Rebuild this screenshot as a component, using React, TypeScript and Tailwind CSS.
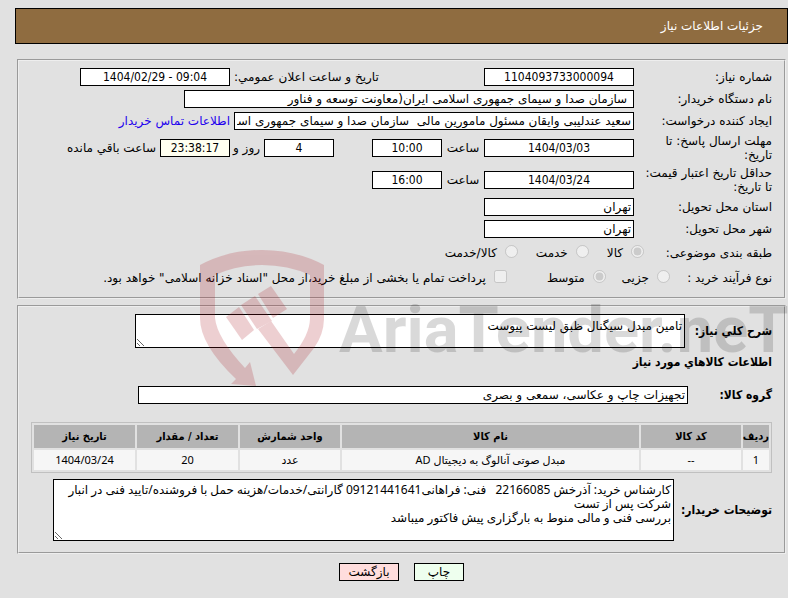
const numeric = "bg-white text-center font-['DejaVu_Sans_Condensed','DejaVu_Sans',sans-serif] [direction:ltr]"
const heading = "font-bold font-['DejaVu_Sans_Condensed','DejaVu_Sans',sans-serif]"

const Field = ({ id, label, value, className }: { id: string; label: string; value: string; className: string }) => (
  <input
    id={id}
    aria-label={label}
    readOnly
    defaultValue={value}
    className={`h-[18px] shrink-0 border border-black px-0.5 ${className}`}
  />
)

const Choice = ({ type, name, label, checked }: { type: "radio" | "checkbox"; name: string; label: string; checked?: boolean }) => (
  <label className="flex items-center gap-2">
    <input
      type={type}
      name={name}
      disabled
      defaultChecked={checked}
      className="mb-1 size-[13px]"
    />
    {label}
  </label>
)

const columns = [
  { title: "ردیف", value: "1", width: "w-[26px]" },
  { title: "کد کالا", value: "--", width: "w-[100px]" },
  { title: "نام کالا", value: "مبدل صوتی آنالوگ به دیجیتال AD", width: "" },
  { title: "واحد شمارش", value: "عدد", width: "w-[100px]" },
  { title: "تعداد / مقدار", value: "20", width: "w-[101px]" },
  { title: "تاریخ نیاز", value: "1404/03/24", width: "w-[101px]" },
]

const Watermark = () => (
  <div aria-hidden="true" dir="ltr" className="pointer-events-none absolute top-[250px] right-0">
    <svg viewBox="200 0 588 140" className="h-[140px] w-[588px]">
      <g fill="#aa141e" opacity="0.2">
        <path d="M200 15Q228 0 262 0Q296 0 324 15V68Q324 84 314 98L293 125L258 79L271 71L294 104Q310 84 310 68V25Q288 15 262 15Q236 15 215 25V68Q217 88 245 118L250 112L256 136L231 134L236 129Q200 95 200 68Z" />
        <path d="M226 67L239 57L254 80L242 90Z" />
        <path d="M241 55L255 46L272 71L257 79Z" />
        <path d="M258 44L271 36L287 59L273 68Z" />
      </g>
      <text x="339" y="102" fill="#000" fillOpacity="0.15" fontSize="65" fontWeight="700" fontFamily="Roboto, sans-serif">
        AriaTender.neT
      </text>
    </svg>
  </div>
)

export default function App() {
  return (
    <div
      dir="rtl"
      className="relative min-h-screen overflow-hidden bg-[#e1e1e1] pt-2 pb-4 font-['DejaVu_Sans',sans-serif] text-xs leading-[14px] text-black"
    >
      <header className="ml-[15px] flex h-9 items-center border border-black bg-[#8f6c40] px-6 text-white">
        <h1>جزئیات اطلاعات نیاز</h1>
      </header>

      <fieldset className="mt-[15px] mr-0.5 ml-[17px] border-2 border-[#eee] px-3 pt-[5px] pb-[7px] [border-style:groove]">
        <div className="flex h-[22px] items-center">
          <label htmlFor="number" className="w-[138px] shrink-0">شماره نیاز:</label>
          <Field id="number" label="شماره نیاز" value="1104093733000094" className={`w-[150px] ${numeric}`} />
          <label htmlFor="announced" className="mr-auto ml-1">تاریخ و ساعت اعلان عمومي:</label>
          <Field id="announced" label="تاریخ و ساعت اعلان عمومي" value="1404/02/29 - 09:04" className={`ml-[49px] w-[150px] ${numeric}`} />
        </div>
        <div className="flex h-[22px] items-center">
          <label htmlFor="buyer" className="w-[138px] shrink-0">نام دستگاه خریدار:</label>
          <Field id="buyer" label="نام دستگاه خریدار" value=" سازمان صدا و سیمای جمهوری اسلامی ایران(معاونت توسعه و فناور" className="w-[450px] bg-white" />
        </div>
        <div className="flex h-[22px] items-center">
          <label htmlFor="creator" className="w-[138px] shrink-0">ایجاد کننده درخواست:</label>
          <Field id="creator" label="ایجاد کننده درخواست" value="سعید عندلیبی وایقان مسئول مامورین مالی  سازمان صدا و سیمای جمهوری اسلامی ایران" className="w-[400px] bg-white" />
          <a href="#contact" className="mr-1 text-[#2200ee]">اطلاعات تماس خریدار</a>
        </div>
        <div className="flex h-8 items-center">
          <label htmlFor="deadline" className="w-[138px] shrink-0 pl-5">مهلت ارسال پاسخ: تا تاریخ:</label>
          <Field id="deadline" label="تاریخ پاسخ" value="1404/03/03" className={`w-[150px] ${numeric}`} />
          <label htmlFor="deadline-hour" className="w-[42px] text-center">ساعت</label>
          <Field id="deadline-hour" label="ساعت پاسخ" value="10:00" className={`w-[70px] ${numeric}`} />
          <Field id="days" label="روز" value="4" className={`mr-[38px] w-[70px] ${numeric}`} />
          <label htmlFor="days" className="w-[34px] pr-1 whitespace-nowrap">روز و</label>
          <Field id="remaining" label="زمان باقي مانده" value="23:38:17" className={`w-[70px] ${numeric} bg-[#fffff0]!`} />
          <label htmlFor="remaining" className="mr-1">ساعت باقي مانده</label>
        </div>
        <div className="flex h-8 items-center">
          <label htmlFor="validity" className="w-[138px] shrink-0 pl-2">حداقل تاریخ اعتبار قیمت: تا تاریخ:</label>
          <Field id="validity" label="تاریخ اعتبار قیمت" value="1404/03/24" className={`w-[150px] ${numeric}`} />
          <label htmlFor="validity-hour" className="w-[42px] text-center">ساعت</label>
          <Field id="validity-hour" label="ساعت اعتبار قیمت" value="16:00" className={`w-[70px] ${numeric}`} />
        </div>
        <div className="flex h-[22px] items-center">
          <label htmlFor="province" className="w-[138px] shrink-0">استان محل تحویل:</label>
          <Field id="province" label="استان محل تحویل" value="تهران" className="w-[150px] bg-white" />
        </div>
        <div className="flex h-[22px] items-center">
          <label htmlFor="city" className="w-[138px] shrink-0">شهر محل تحویل:</label>
          <Field id="city" label="شهر محل تحویل" value="تهران" className="w-[150px] bg-white" />
        </div>
        <div className="flex h-[26px] items-center">
          <span className="w-[128px] shrink-0">طبقه بندی موضوعی:</span>
          <div className="flex gap-[18px]">
            <Choice type="radio" name="category" label="کالا" checked />
            <Choice type="radio" name="category" label="خدمت" />
            <Choice type="radio" name="category" label="کالا/خدمت" />
          </div>
        </div>
        <div className="flex h-6 items-center">
          <span className="w-[102px] shrink-0">نوع فرآیند خرید :</span>
          <div className="flex gap-4">
            <Choice type="radio" name="process" label="جزیی" />
            <Choice type="radio" name="process" label="متوسط" checked />
          </div>
          <div className="mr-10">
            <Choice type="checkbox" name="treasury" label={'پرداخت تمام یا بخشی از مبلغ خرید،از محل "اسناد خزانه اسلامی" خواهد بود.'} />
          </div>
        </div>
      </fieldset>

      <fieldset className="mt-1.5 mr-0.5 ml-[17px] border-2 border-[#eee] px-3 pt-[7px] pb-[11px] [border-style:groove]">
        <div className="flex items-center">
          <label htmlFor="summary" className={`w-[87px] shrink-0 ${heading}`}>شرح كلي نياز:</label>
          <textarea id="summary" readOnly defaultValue="تامین مبدل سیگنال ظبق لیست پیوست" className="h-[34px] w-[550px] border border-black bg-white px-0.5 py-1" />
        </div>
        <h2 className={`mt-[7px] ${heading}`}>اطلاعات كالاهاي مورد نياز</h2>
        <div className="mt-[17px] flex items-center">
          <label htmlFor="group" className={`w-[84px] shrink-0 ${heading}`}>گروه کالا:</label>
          <Field id="group" label="گروه کالا" value="تجهیزات چاپ و عکاسی، سمعی و بصری" className="w-[550px] bg-white" />
        </div>
        <table className="mt-[18px] w-full table-fixed border-separate border-spacing-0.5 border border-[#c0c0c0] text-center text-[11px]">
          <thead>
            <tr>
              {columns.map((column) => (
                <th key={column.title} className={`h-[23px] bg-[#b4b4b4] p-0 whitespace-nowrap ${heading} ${column.width}`}>{column.title}</th>
              ))}
            </tr>
          </thead>
          <tbody className="font-['Noto_Sans','DejaVu_Sans',sans-serif]">
            <tr>
              {columns.map((column) => (
                <td key={column.title} className="h-5 bg-[#f6f6f6] p-0">{column.value}</td>
              ))}
            </tr>
          </tbody>
        </table>
        <div className="mt-1.5 flex items-center">
          <label htmlFor="notes" className={`w-[98px] shrink-0 ${heading}`}>توضیحات خریدار:</label>
          <textarea
            id="notes"
            readOnly
            defaultValue={"کارشناس خرید: آذرخش 22166085   فنی: فراهانی09121441641 گارانتی/خدمات/هزینه حمل با فروشنده/تایید فنی در انبار شرکت پس از تست\nبررسی فنی و مالی منوط به بارگزاری پیش فاکتور میباشد"}
            className="h-[62px] w-[621px] border border-black bg-white px-0.5 py-[3px] font-['Noto_Sans','DejaVu_Sans',sans-serif]"
          />
        </div>
      </fieldset>

      <div className="mt-[9px] ml-[15px] flex justify-center gap-[15px]">
        <button type="button" className="h-[18px] w-[50px] border border-black bg-[#eeffee]">چاپ</button>
        <button type="button" className="h-[18px] w-[60px] border border-black bg-[#ffdddd]">بازگشت</button>
      </div>

      <Watermark />
    </div>
  )
}
